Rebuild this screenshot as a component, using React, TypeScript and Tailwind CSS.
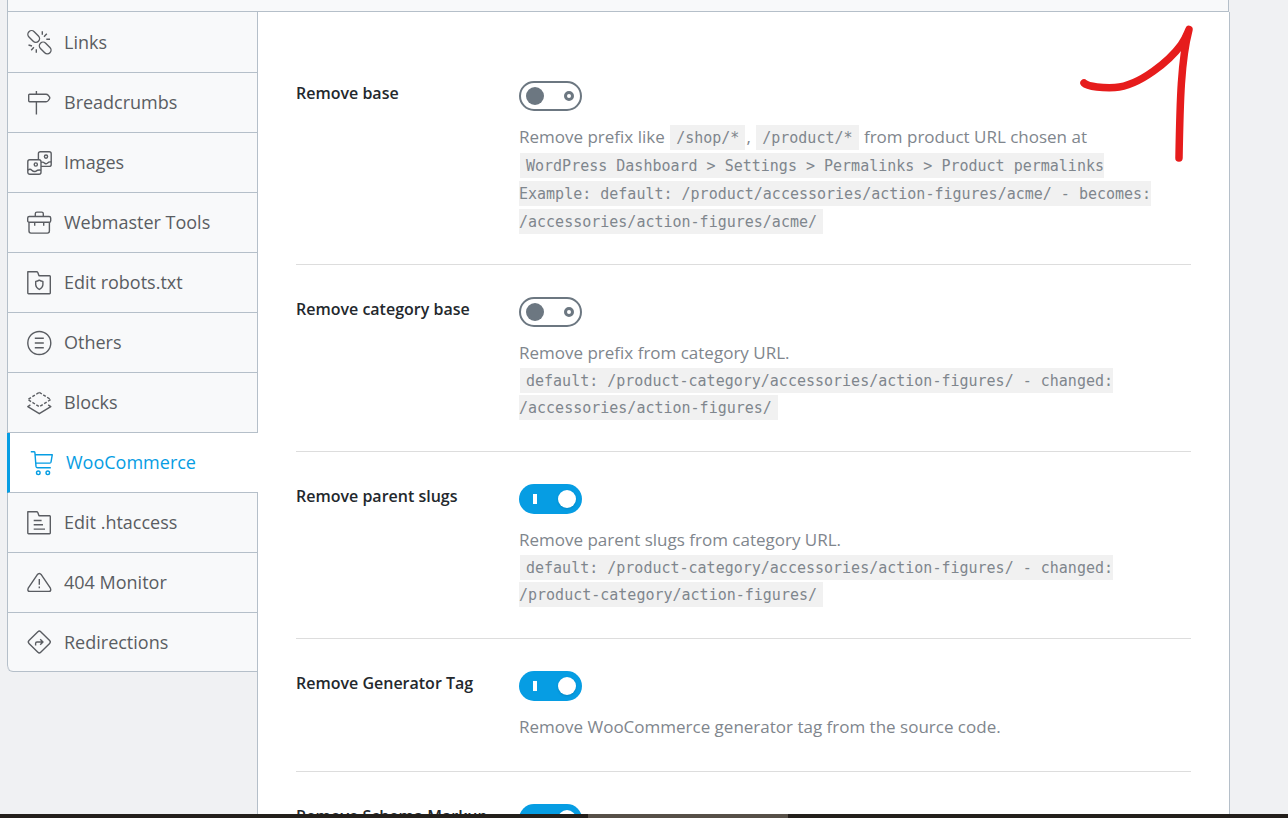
import { useState } from 'react'
import type { ReactNode } from 'react'

function Icon({ children }: { children: ReactNode }) {
    return (
        <svg className="h-6 w-6 shrink-0 overflow-visible" viewBox="0 0 24 24" fill="none" stroke="currentColor" strokeWidth="1.4" strokeLinejoin="round" aria-hidden="true">
            {children}
        </svg>
    )
}

const folder = 'M.8.7H9.6Q10.4.7 10.8 1.5L12 4.7H22.6Q23.3 4.7 23.3 5.5V22.1Q23.3 22.8 22.6 22.8H1.5Q.8 22.8.8 22.1Z'

const tabs = [
    {
        name: 'Links',
        icon: (
            <>
                <rect x="0" y="2.7" width="13.4" height="7.4" rx="3.7" transform="rotate(45 6.7 6.4)" />
                <rect x="11.5" y="14.2" width="13.4" height="7.4" rx="3.7" transform="rotate(45 18.2 17.9)" />
                <path d="M15.3 1.3V4.8M19.8 3.7L17 6.7M19.3 9.3H23M9.3 19.3V22.8M6.9 17.3L4.2 20.3M1.5 15L5 16" />
            </>
        ),
    },
    {
        name: 'Breadcrumbs',
        icon: <path d="M9.4 0V3.2M9.4 10.7V23.5M2.6 3.2H19Q20.3 3.2 21.2 4.3L22.6 6.1Q23 6.9 22.6 7.7L21.2 9.6Q20.3 10.7 19 10.7H2.6Q1.7 10.7 1.7 9.8V4.1Q1.7 3.2 2.6 3.2Z" />,
    },
    {
        name: 'Images',
        icon: (
            <>
                <rect x=".8" y="8.7" width="13.2" height="14.6" rx="2" />
                <path d="M11.4 8.7V2.8Q11.4.8 13.4.8H22.2Q24.2.8 24.2 2.8V13.4Q24.2 15.4 22.2 15.4H14" />
                <circle cx="19" cy="5.6" r="1.6" />
                <circle cx="8.8" cy="13.5" r="1.6" />
                <path d="M.8 19.3Q3 17.4 4.8 19.2T8.6 20.4Q11 18.6 14 19.2M14 11.4Q16 10.6 17.4 12T20.6 12Q22 10.4 24.2 11" />
            </>
        ),
    },
    {
        name: 'Webmaster Tools',
        icon: (
            <>
                <rect x=".7" y="5.5" width="23" height="5.8" rx="1.6" />
                <path d="M2 11.3V20.1Q2 22.1 4 22.1H20.4Q22.4 22.1 22.4 20.1V11.3M8.3 5.5V2.7Q8.3 1.1 9.9 1.1H14.7Q16.3 1.1 16.3 2.7V5.5M7.7 11.3V14.7M16.7 11.3V14.7" />
            </>
        ),
    },
    {
        name: 'Edit robots.txt',
        icon: (
            <>
                <path d={folder} />
                <path d="M12.3 9.1Q14 10.3 15.9 10.4V13.7Q15.6 16.8 12.3 18.500Q9 16.8 8.7 13.7V10.4Q10.6 10.3 12.3 9.1Z" />
            </>
        ),
    },
    {
        name: 'Others',
        icon: (
            <>
                <circle cx="12.3" cy="12" r="11.5" />
                <path d="M7.8 7.3H16.8M7.8 12H16.8M7.8 16.7H16.8" />
            </>
        ),
    },
    {
        name: 'Blocks',
        icon: (
            <>
                <path d="M12.3 1.4L23.8 8.5L12.3 15.7L.8 8.5Z" strokeDasharray="3 1.6" />
                <path d="M3.4 13.9L.8 15.6L12.3 22.7L23.8 15.6L21.2 13.9" />
            </>
        ),
    },
    {
        name: 'WooCommerce',
        icon: (
            <>
                <path d="M1.8.7H5.2Q5.9.7 5.9 1.6L7 15.4Q7.2 16.8 8.6 16.8H21.8M6.1 3.7H23.3L22 11.2Q21.8 12.1 20.8 12.1H6.8" />
                <circle cx="9.3" cy="21.8" r="1.8" />
                <circle cx="18.8" cy="21.8" r="1.8" />
            </>
        ),
    },
    {
        name: 'Edit .htaccess',
        icon: (
            <>
                <path d={folder} />
                <path d="M6.7 9.500H14.6M6.7 13.8H16M6.7 18.1H18" />
            </>
        ),
    },
    {
        name: '404 Monitor',
        icon: (
            <>
                <path d="M10.2 3.8Q12.3 1.2 14.4 3.8L23.4 17.2Q24.6 20.4 21.8 20.4H2.8Q0 20.4 1.2 17.2Z" />
                <path d="M12.3 8V13.8M12.3 15.6V17.2" />
            </>
        ),
    },
    {
        name: 'Redirections',
        icon: (
            <>
                <rect x="4" y="3.7" width="16.6" height="16.6" rx="2" transform="rotate(45 12.3 12)" />
                <path d="M8.6 15.4V13.4Q8.6 12 10 12H16M13.2 9.2L16 12L13.2 14.8" />
            </>
        ),
    },
]

function Sidebar() {
    return (
        <nav className="w-[251px] shrink-0 border-r border-[#b5bfc9]">
            <div className="-mr-px overflow-hidden rounded-bl-md border-b border-[#b5bfc9]">
                {tabs.map((tab) => (
                    <a
                        key={tab.name}
                        href="#"
                        className={
                            tab.name === 'WooCommerce'
                                ? 'flex h-[60px] items-center gap-[13px] border-b border-l-3 border-b-[#b5bfc9] border-l-[#069de3] bg-white pl-[19px] text-[#069de3]'
                                : 'flex h-[60px] items-center gap-[13px] border-r border-b border-l border-[#b5bfc9] bg-[#f8f9fa] pl-[19px] text-[#5a5d62] first:h-[61px] last:h-[58px] last:rounded-bl-md last:border-b-0'
                        }
                    >
                        <Icon>{tab.icon}</Icon>
                        {tab.name}
                    </a>
                ))}
            </div>
        </nav>
    )
}

function Toggle({ id, on }: { id: string; on: boolean }) {
    const [checked, setChecked] = useState(on)
    return (
        <label className="block w-[63px] cursor-pointer">
            <input id={id} type="checkbox" role="switch" className="sr-only" checked={checked} onChange={() => setChecked(!checked)} />
            {checked ? (
                <span className="flex h-[30px] items-center justify-between rounded-full bg-[#069de3] pr-[6px] pl-[14px]">
                    <span className="h-[10px] w-1 bg-white" />
                    <span className="h-[18px] w-[18px] rounded-full bg-white shadow-sm" />
                </span>
            ) : (
                <span className="flex h-[30px] items-center justify-between rounded-full border-2 border-[#6c7781] bg-white pr-[6px] pl-[5px]">
                    <span className="h-[18px] w-[18px] rounded-full bg-[#6c7781]" />
                    <span className="h-[10px] w-[10px] rounded-full border-3 border-[#6c7781]" />
                </span>
            )}
        </label>
    )
}

function Code({ children }: { children: ReactNode }) {
    return <code className="mx-px bg-[#f1f1f1] px-[6px] pt-1 pb-[3px] font-['DejaVu_Sans_Mono',monospace] text-[15px] leading-5">{children}</code>
}

function Setting({ id, name, on = false, children }: { id: string; name: string; on?: boolean; children?: ReactNode }) {
    return (
        <div className="flex border-b border-[#dddddd] pt-8 pb-[31px] first:pb-[29px] first:[&_p]:leading-7">
            <label htmlFor={id} className="w-[223px] shrink-0 text-[16px] leading-6 font-semibold text-[#23282d]">
                {name}
            </label>
            <div className="min-w-0 flex-1">
                <Toggle id={id} on={on} />
                <p className="mt-3 text-[17px] leading-[27px] text-[#7f868d]">{children}</p>
            </div>
        </div>
    )
}

// red pen mark drawn over the panel
function PenMark() {
    return (
        <svg className="pointer-events-none absolute top-0 right-0 h-[160px] w-[160px]" viewBox="1069 12 160 160" fill="none" stroke="#e61c1c" strokeWidth="7.5" strokeLinecap="round" strokeLinejoin="round" aria-hidden="true">
            <path d="M1084 83C1088 87 1104 88 1115 87.500C1140 86 1170 60 1181 45C1186 38 1187 34 1189 29.500C1181 60 1180 100 1179 158" />
        </svg>
    )
}

export default function App() {
    return (
        <div className="flex h-screen flex-col overflow-hidden bg-[#f0f1f3] font-['Open_Sans','Noto_Sans',sans-serif]">
            <div className="mr-[59px] ml-[7px] h-3 shrink-0 border-x border-b border-[#b5bfc9] bg-[#f8f9fa]" />
            <div className="mr-[58px] ml-[7px] flex min-h-0 flex-1 text-[18px]">
                <Sidebar />
                <main className="relative min-w-0 flex-1 overflow-hidden border-r border-[#b5bfc9] bg-white px-[38px] pt-[37px]">
                    <Setting id="remove-base" name="Remove base">
                        Remove prefix like <Code>/shop/*</Code>, <Code>/product/*</Code> from product URL chosen at
                        <br />
                        <Code>
                            WordPress Dashboard &gt; Settings &gt; Permalinks &gt; Product permalinks
                            <br />
                            Example: default: /product/accessories/action-figures/acme/ - becomes: /accessories/action-figures/acme/
                        </Code>
                    </Setting>
                    <Setting id="remove-category-base" name="Remove category base">
                        Remove prefix from category URL.
                        <br />
                        <Code>default: /product-category/accessories/action-figures/ - changed: /accessories/action-figures/</Code>
                    </Setting>
                    <Setting id="remove-parent-slugs" name="Remove parent slugs" on>
                        Remove parent slugs from category URL.
                        <br />
                        <Code>default: /product-category/accessories/action-figures/ - changed: /product-category/action-figures/</Code>
                    </Setting>
                    <Setting id="remove-generator" name="Remove Generator Tag" on>
                        Remove WooCommerce generator tag from the source code.
                    </Setting>
                    <Setting id="remove-schema" name="Remove Schema Markup" on />
                    <PenMark />
                </main>
            </div>
            <div className="flex h-1 shrink-0 bg-[#231f1b]">
                <div className="ml-[588px] w-[200px] bg-[#575048]" />
            </div>
        </div>
    )
}
